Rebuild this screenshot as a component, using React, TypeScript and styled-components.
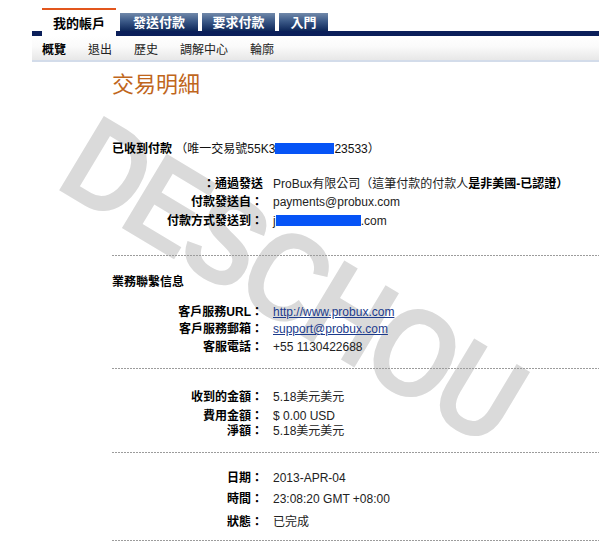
import React from "react";
import styled, { createGlobalStyle } from "styled-components";

const GlobalStyle = createGlobalStyle`
  html, body {
    margin: 0;
    padding: 0;
    background: #fff;
    overflow: hidden;
  }
  body {
    font-family: "Liberation Sans", "Noto Sans CJK TC", sans-serif;
    font-size: 12px;
    color: #111;
  }
`;

const Page = styled.div`
  position: relative;
  height: 550px;
  box-sizing: border-box;
  padding: 8px 0 0 32px;
  overflow: hidden;
`;

const Watermark = styled.div`
  position: absolute;
  left: 292px;
  top: 280px;
  transform: translate(-50%, -50%) rotate(31deg) scaleX(0.86);
  font-family: "Liberation Sans", sans-serif;
  font-weight: bold;
  font-size: 126px;
  letter-spacing: -6px;
  line-height: 1;
  color: #dadada;
  white-space: nowrap;
  pointer-events: none;
  user-select: none;
`;

const Layer = styled.div`
  position: relative;
`;

const TabBar = styled.div`
  display: flex;
  align-items: flex-end;
  gap: 4px;
  height: 28px;
  padding-left: 10px;
  background: linear-gradient(to bottom, transparent 23px, #0b1f5a 23px);
`;

const Tab = styled.div<{ $active?: boolean; $width: number }>`
  box-sizing: border-box;
  width: ${(p) => p.$width}px;
  text-align: center;
  font-size: 13px;
  font-weight: bold;
  line-height: 16px;
  ${(p) =>
    p.$active
      ? `
    height: 28px;
    padding-top: 6px;
    background: #fff;
    border-top: 2px solid #e2561d;
    color: #000;
  `
      : `
    height: 18px;
    margin-bottom: 5px;
    padding-top: 2px;
    color: #fff;
    background: linear-gradient(to bottom, #7189aa 0%, #3c5a88 45%, #0d2659 100%);
  `}
`;

const SubNav = styled.div`
  display: flex;
  align-items: center;
  gap: 22px;
  height: 24px;
  padding-left: 10px;
  background: linear-gradient(to bottom, #fff 0%, #fafafa 45%, #e7e7e7 100%);
  border-bottom: 2px solid #d3dcea;
`;

const NavItem = styled.span<{ $current?: boolean }>`
  font-size: 12px;
  color: ${(p) => (p.$current ? "#000" : "#222")};
  font-weight: ${(p) => (p.$current ? "bold" : "normal")};
`;

const Content = styled.div`
  padding-left: 80px;
`;

const Title = styled.h1`
  margin: 11px 0 0;
  font-size: 22px;
  line-height: 24px;
  font-weight: normal;
  color: #c0661c;
`;

const Line = styled.div<{ $mt: number }>`
  margin-top: ${(p) => p.$mt}px;
  line-height: 15px;
  white-space: nowrap;
`;

const Row = styled.div<{ $mt: number }>`
  display: grid;
  grid-template-columns: 151px 1fr;
  column-gap: 10px;
  margin-top: ${(p) => p.$mt}px;
  line-height: 15px;
  white-space: nowrap;
`;

const Label = styled.div`
  text-align: right;
  font-weight: bold;
  color: #000;
`;

const Value = styled.div`
  color: #222;
`;

const Strong = styled.b`
  color: #000;
`;

const Divider = styled.div<{ $mt: number }>`
  margin-top: ${(p) => p.$mt}px;
  height: 1px;
  background: repeating-linear-gradient(to right, #9c9c9c 0 2px, transparent 2px 3px);
`;

const Redact = styled.span<{ $w: number }>`
  display: inline-block;
  width: ${(p) => p.$w}px;
  height: 11px;
  vertical-align: -1px;
  background: #0654f6;
`;

const Link = styled.a`
  color: #1c3b8c;
  text-decoration: underline;
`;

const tabs = [
  { label: "我的帳戶", width: 74, active: true },
  { label: "發送付款", width: 78 },
  { label: "要求付款", width: 73 },
  { label: "入門", width: 49 },
];

const subnav = ["概覽", "退出", "歷史", "調解中心", "輪廓"];

export default function App() {
  return (
    <>
      <GlobalStyle />
      <Page>
        <Watermark>DESCHOU</Watermark>
        <Layer>
          <TabBar>
            {tabs.map((t) => (
              <Tab key={t.label} $active={t.active} $width={t.width}>
                {t.label}
              </Tab>
            ))}
          </TabBar>
          <SubNav>
            {subnav.map((s, i) => (
              <NavItem key={s} $current={i === 0}>
                {s}
              </NavItem>
            ))}
          </SubNav>

          <Content>
            <Title>交易明細</Title>

            <Line $mt={45}>
              <Strong>已收到付款</Strong> （唯一交易號55K3
              <Redact $w={59} />
              23533）
            </Line>

            <Row $mt={20}>
              <Label>：通過發送</Label>
              <Value>
                ProBux有限公司（這筆付款的付款人
                <Strong>是非美國-已認證）</Strong>
              </Value>
            </Row>
            <Row $mt={3}>
              <Label>付款發送自：</Label>
              <Value>payments@probux.com</Value>
            </Row>
            <Row $mt={4}>
              <Label>付款方式發送到：</Label>
              <Value>
                j<Redact $w={85} />
                .com
              </Value>
            </Row>

            <Divider $mt={26} />

            <Line $mt={19}>
              <Strong>業務聯繫信息</Strong>
            </Line>
            <Row $mt={15}>
              <Label>客戶服務URL：</Label>
              <Value>
                <Link href="#">http://www.probux.com</Link>
              </Value>
            </Row>
            <Row $mt={2}>
              <Label>客戶服務郵箱：</Label>
              <Value>
                <Link href="#">support@probux.com</Link>
              </Value>
            </Row>
            <Row $mt={3}>
              <Label>客服電話：</Label>
              <Value>+55 1130422688</Value>
            </Row>

            <Divider $mt={13} />

            <Row $mt={21}>
              <Label>收到的金額：</Label>
              <Value>5.18美元美元</Value>
            </Row>
            <Row $mt={4}>
              <Label>費用金額：</Label>
              <Value>$ 0.00 USD</Value>
            </Row>
            <Row $mt={0}>
              <Label>淨額：</Label>
              <Value>5.18美元美元</Value>
            </Row>

            <Divider $mt={13} />

            <Row $mt={18}>
              <Label>日期：</Label>
              <Value>2013-APR-04</Value>
            </Row>
            <Row $mt={6}>
              <Label>時間：</Label>
              <Value>23:08:20 GMT +08:00</Value>
            </Row>
            <Row $mt={8}>
              <Label>狀態：</Label>
              <Value>已完成</Value>
            </Row>

            <Divider $mt={10} />
          </Content>
        </Layer>
      </Page>
    </>
  );
}
